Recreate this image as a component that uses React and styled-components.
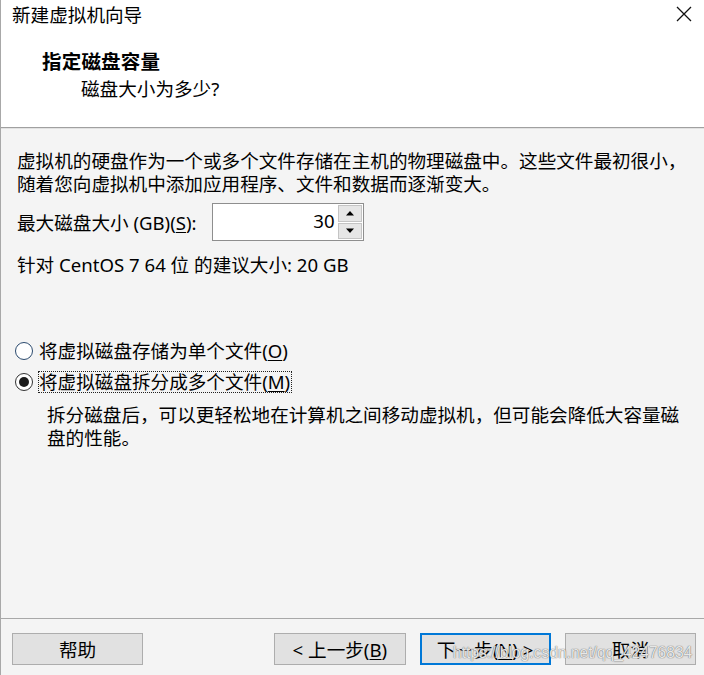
import React from "react";
import styled, { createGlobalStyle } from "styled-components";

const Global = createGlobalStyle`
  html, body { margin: 0; padding: 0; background: #f4f4f4; }
  body {
    font-family: "Noto Sans", "Noto Sans CJK SC", sans-serif;
    color: #000;
  }
`;

const Window = styled.div`
  width: 704px;
  height: 675px;
  box-sizing: border-box;
  border-left: 1px solid #a8a8a8;
  display: flex;
  flex-direction: column;
  font-size: 18.6px;
  line-height: 23px;
  position: relative;
  overflow: hidden;
`;

const Header = styled.header`
  background: #fff;
  height: 127px;
  flex: none;
  border-bottom: 1px solid #a0a0a0;
  box-shadow: 0 1px 0 #e2e2e2;
`;

const TitleRow = styled.div`
  height: 28px;
  display: flex;
  align-items: center;
  justify-content: space-between;
  padding: 0 12px 0 11px;
`;

const Heading = styled.div`
  margin: 22px 0 0 41px;
  font-weight: 700;
  font-size: 19.5px;
  letter-spacing: 0.2px;
`;

const Subtitle = styled.div`
  margin: 4px 0 0 80px;
`;

const Body = styled.main`
  flex: 1;
  padding: 21px 16px 0 16px;
  display: flex;
  flex-direction: column;
`;

const Para = styled.p`
  margin: 0;
`;

const InputRow = styled.div`
  margin-top: 8px;
  display: flex;
  align-items: center;
  gap: 15px;
  height: 38px;
`;

const Spinner = styled.div`
  width: 152px;
  height: 38px;
  box-sizing: border-box;
  border: 1px solid #8e8e8e;
  background: #fff;
  display: flex;
`;

const SpinValue = styled.div`
  flex: 1;
  text-align: right;
  padding-right: 3px;
  line-height: 34px;
`;

const SpinButtons = styled.div`
  width: 24px;
  display: flex;
  flex-direction: column;
  padding: 1px 1px 1px 0;
  gap: 1px;
`;

const SpinBtn = styled.div`
  flex: 1;
  background: #e6e6e6;
  border: 1px solid #c4c4c4;
  display: flex;
  align-items: center;
  justify-content: center;
`;

const Recommend = styled.div`
  margin-top: 12px;
`;

const RadioGroup = styled.div`
  margin: 64px 0 0 -2px;
  display: flex;
  flex-direction: column;
  gap: 9px;
`;

const RadioRow = styled.div`
  display: flex;
  align-items: center;
  gap: 6px;
  height: 22px;
`;

const RadioCircle = styled.span`
  width: 18px;
  height: 18px;
  box-sizing: border-box;
  border-radius: 50%;
  border: 1.5px solid ${(p) => (p.$checked ? "#333" : "#2b4a6e")};
  background: #fff;
  display: flex;
  align-items: center;
  justify-content: center;
  &::after {
    content: "";
    width: 10px;
    height: 10px;
    border-radius: 50%;
    background: ${(p) => (p.$checked ? "#1b1b1b" : "transparent")};
  }
`;

const RadioLabel = styled.span`
  line-height: 20px;
  padding: 0 1px 0 0;
  border: 1px dotted ${(p) => (p.$focused ? "#222" : "transparent")};
  margin-left: -1px;
`;

const Description = styled.p`
  margin: 10px 0 0 30px;
`;

const Footer = styled.footer`
  flex: none;
  height: 57px;
  box-sizing: border-box;
  border-top: 1px solid #a8a8a8;
  padding: 14px 8px 0 11px;
  display: flex;
  align-items: flex-start;
  position: relative;
`;

const Button = styled.div`
  width: 132px;
  height: 32px;
  box-sizing: border-box;
  background: #e1e1e1;
  border: ${(p) => (p.$default ? "2px solid #0078d7" : "1px solid #adadad")};
  display: flex;
  align-items: center;
  justify-content: center;
  line-height: 23px;
  margin-left: ${(p) => p.$gap || 0}px;
`;

const Key = styled.span`
  text-decoration: underline;
  text-underline-offset: 2px;
  text-decoration-thickness: 1px;
`;

const Watermark = styled.div`
  position: absolute;
  left: 452px;
  top: 25px;
  font-family: "Liberation Sans", Arial, sans-serif;
  font-size: 15.6px;
  line-height: 18px;
  color: rgba(255, 255, 255, 0.85);
  text-shadow: 0 0 1px rgba(90, 90, 90, 0.9), 0 0 1px rgba(90, 90, 90, 0.6);
  pointer-events: none;
  white-space: nowrap;
`;

const CloseIcon = () => (
  <svg width="16" height="16" viewBox="0 0 16 16">
    <path d="M1 1 L15 15 M15 1 L1 15" stroke="#111" strokeWidth="1.3" fill="none" />
  </svg>
);

const Arrow = ({ up }) => (
  <svg width="10" height="6" viewBox="0 0 10 6">
    <path d={up ? "M1 5.5 L5 1 L9 5.5 Z" : "M1 0.5 L5 5 L9 0.5 Z"} fill="#000" />
  </svg>
);

export default function App() {
  return (
    <>
      <Global />
      <Window>
        <Header>
          <TitleRow>
            <span>新建虚拟机向导</span>
            <CloseIcon />
          </TitleRow>
          <Heading>指定磁盘容量</Heading>
          <Subtitle>磁盘大小为多少?</Subtitle>
        </Header>
        <Body>
          <Para>
            虚拟机的硬盘作为一个或多个文件存储在主机的物理磁盘中。这些文件最初很小，
            <br />
            随着您向虚拟机中添加应用程序、文件和数据而逐渐变大。
          </Para>
          <InputRow>
            <span>
              最大磁盘大小 (GB)(<Key>S</Key>):
            </span>
            <Spinner>
              <SpinValue>30</SpinValue>
              <SpinButtons>
                <SpinBtn>
                  <Arrow up />
                </SpinBtn>
                <SpinBtn>
                  <Arrow />
                </SpinBtn>
              </SpinButtons>
            </Spinner>
          </InputRow>
          <Recommend>针对 CentOS 7 64 位 的建议大小: 20 GB</Recommend>
          <RadioGroup>
            <RadioRow>
              <RadioCircle />
              <RadioLabel>
                将虚拟磁盘存储为单个文件(<Key>O</Key>)
              </RadioLabel>
            </RadioRow>
            <RadioRow>
              <RadioCircle $checked />
              <RadioLabel $focused>
                将虚拟磁盘拆分成多个文件(<Key>M</Key>)
              </RadioLabel>
            </RadioRow>
          </RadioGroup>
          <Description>
            拆分磁盘后，可以更轻松地在计算机之间移动虚拟机，但可能会降低大容量磁
            <br />
            盘的性能。
          </Description>
        </Body>
        <Footer>
          <Button>帮助</Button>
          <Button $gap={131}>
            &lt; 上一步(<Key>B</Key>)
          </Button>
          <Button $gap={14} $default>
            下一步(<Key>N</Key>) &gt;
          </Button>
          <Button $gap={14}>取消</Button>
          <Watermark>https://blog.csdn.net/qq_42476834</Watermark>
        </Footer>
      </Window>
    </>
  );
}
